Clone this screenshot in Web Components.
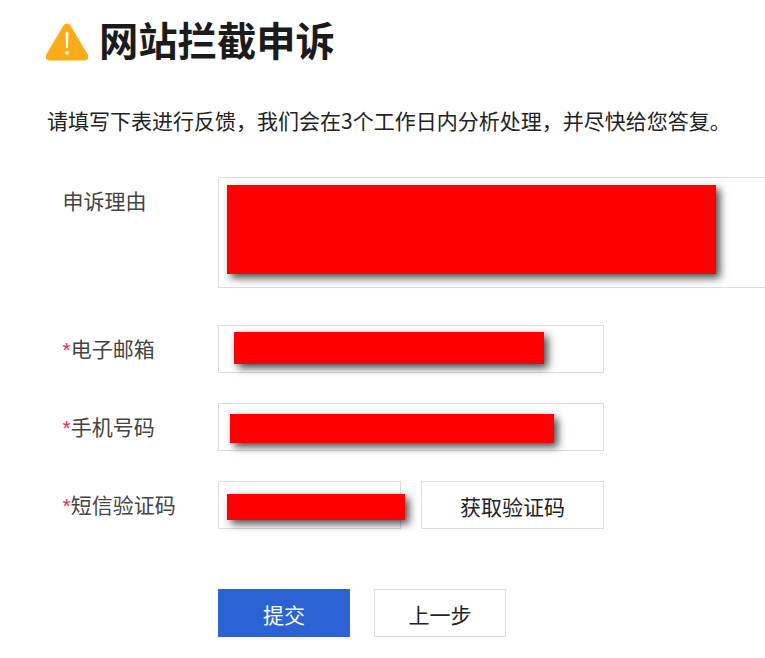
<!DOCTYPE html>
<html lang="zh-CN">
<head>
<meta charset="utf-8">
<title>网站拦截申诉</title>
<style>
    html, body { margin: 0; background: #fff; overflow: hidden; height: 100%; }
    body { font-family: "Noto Sans CJK SC", "Noto Sans", sans-serif; }
</style>
</head>
<body>
<appeal-page>
    <span slot="title">网站拦截申诉</span>
    <span slot="intro">请填写下表进行反馈，我们会在3个工作日内分析处理，并尽快给您答复。</span>

    <form-row style="margin-bottom:37px">
        <span slot="label">申诉理由</span>
        <field-box wide style="height:109px">
            <red-mask style="left:8px;top:7px;width:489px;height:89px"></red-mask>
        </field-box>
    </form-row>

    <form-row required style="margin-bottom:30px">
        <span slot="label">电子邮箱</span>
        <field-box>
            <red-mask style="left:15px;top:6px;width:310px;height:32px"></red-mask>
        </field-box>
    </form-row>

    <form-row required style="margin-bottom:30px">
        <span slot="label">手机号码</span>
        <field-box>
            <red-mask style="left:11px;top:10px;width:324px;height:29px"></red-mask>
        </field-box>
    </form-row>

    <form-row required style="margin-bottom:60px">
        <span slot="label">短信验证码</span>
        <field-box short>
            <red-mask style="left:8px;top:12px;width:178px;height:26px"></red-mask>
        </field-box>
        <action-button slot="extra" style="width:183px;margin-left:20px;padding-top:2px">获取验证码</action-button>
    </form-row>

    <form-row>
        <action-button primary style="width:132px;padding-top:2px">提交</action-button>
        <action-button slot="extra" style="width:132px;margin-left:24px;padding-top:2px">上一步</action-button>
    </form-row>
</appeal-page>

<script>
class AppealPage extends HTMLElement {
    constructor() {
        super();
        this.attachShadow({mode: 'open'});
        this.shadowRoot.innerHTML = `
        <style>
            :host {
                display: block;
                padding: 14px 0 0 48px;
                color: #222;
            }
            header {
                display: flex;
                align-items: flex-start;
                height: 56px;
                gap: 10px;
            }
            svg { width: 42px; height: 38px; flex: none; margin: 9px 0 0 -2px; }
            h1 {
                margin: -3px 0 0 1px;
                font-size: 39.3px;
                line-height: 56px;
                font-weight: 700;
                color: #1b1b1b;
                white-space: nowrap;
            }
            p {
                margin: 30px 0 37px -1px;
                font-size: 21px;
                line-height: 40px;
                white-space: nowrap;
                color: #222;
            }
        </style>
        <header>
            <svg viewBox="2 2 39 36.500" preserveAspectRatio="none" aria-hidden="true">
                <path fill="#fdab1b" d="M21.500 2.500c1.400 0 2.600.8 3.400 2.100l15.900 27.600c1.500 2.700-.3 5.800-3.300 5.800H5.500c-3 0-4.800-3.100-3.300-5.800L18.100 4.600c.8-1.300 2-2.100 3.400-2.100z"/>
                <path fill="#fff" d="M20.200 11h2.600l-.5 15h-1.600zM21.500 29a1.700 1.700 0 1 1 0 3.400 1.700 1.700 0 0 1 0-3.400z"/>
            </svg>
            <h1><slot name="title"></slot></h1>
        </header>
        <p><slot name="intro"></slot></p>
        <slot></slot>
        `;
    }
}

class FormRow extends HTMLElement {
    constructor() {
        super();
        this.attachShadow({mode: 'open'});
        this.shadowRoot.innerHTML = `
        <style>
            :host {
                display: grid;
                grid-template-columns: 170px auto 1fr;
                align-items: start;
            }
            .label {
                padding-left: 14.500px;
                font-size: 21px;
                line-height: 46px;
                color: #444;
                white-space: nowrap;
            }
            .star { display: none; color: #e8294a; font-family: "Liberation Sans", sans-serif; }
            :host([required]) .star { display: inline; }
        </style>
        <div class="label"><span class="star">*</span><slot name="label"></slot></div>
        <div><slot></slot></div>
        <div><slot name="extra"></slot></div>
        `;
    }
}

class FieldBox extends HTMLElement {
    constructor() {
        super();
        this.attachShadow({mode: 'open'});
        this.shadowRoot.innerHTML = `
        <style>
            :host {
                display: block;
                position: relative;
                width: 384px;
                height: 46px;
                border: 1px solid #ddd;
                background: #fff;
            }
            :host([wide]) { width: 546px; border-right: 0; }
            :host([short]) { width: 181px; }
        </style>
        <slot></slot>
        `;
    }
}

class RedMask extends HTMLElement {
    constructor() {
        super();
        this.attachShadow({mode: 'open'});
        this.shadowRoot.innerHTML = `
        <style>
            :host {
                display: block;
                position: absolute;
                background: #f00;
                box-shadow: 4px 4px 8px rgba(0, 0, 0, .7);
            }
        </style>
        `;
    }
}

class ActionButton extends HTMLElement {
    constructor() {
        super();
        this.attachShadow({mode: 'open'});
        this.shadowRoot.innerHTML = `
        <style>
            :host {
                display: flex;
                align-items: center;
                justify-content: center;
                box-sizing: border-box;
                height: 48px;
                border: 1px solid #ddd;
                background: #fff;
                color: #222;
                font-size: 21px;
                cursor: pointer;
            }
            :host([primary]) {
                background: #2b63d5;
                border-color: #2b63d5;
                color: #fff;
            }
        </style>
        <slot></slot>
        `;
    }
}

customElements.define('appeal-page', AppealPage);
customElements.define('form-row', FormRow);
customElements.define('field-box', FieldBox);
customElements.define('red-mask', RedMask);
customElements.define('action-button', ActionButton);
</script>
</body>
</html>
